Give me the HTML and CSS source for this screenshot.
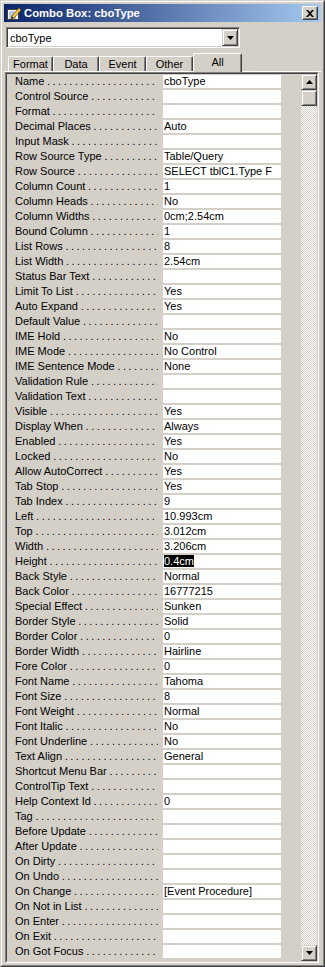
FILE: index.html
```html
<!DOCTYPE html>
<html lang="en">
<head>
    <meta charset="UTF-8">
    <title>Combo Box: cboType</title>
    <link rel="stylesheet" href="styles.css">
</head>
<body>
<div class="window">
  <div class="frame">
    <div class="titlebar">
      <svg class="app-icon" width="16" height="16" viewBox="0 0 16 16">
        <rect x="1.5" y="4.5" width="11" height="10" fill="#fff" stroke="#404040"/>
        <path d="M3 7h6M3 9h5M3 11h7M3 13h7" stroke="#7090c0"/>
        <polygon points="6,11 13,3 15,5 8,13 5,14" fill="#f8d048" stroke="#705000" stroke-width="0.8"/>
        <polygon points="5,14 6,11 8,13" fill="#404040"/>
      </svg>
      <span class="title">Combo Box: cboType</span>
      <span class="close">
        <svg width="8" height="7" viewBox="0 0 8 7"><path d="M0 0h2l2 2 2-2h2L5 3.5 8 7H6L4 5 2 7H0l3-3.5z" fill="#000"/></svg>
      </span>
    </div>

    <div class="combo">
      <span class="combo-text">cboType</span>
      <span class="btn combo-btn">
        <svg width="7" height="4" viewBox="0 0 7 4"><polygon points="0,0 7,0 3.5,4" fill="#000"/></svg>
      </span>
    </div>

    <div class="tabs">
      <span class="tab w45">Format</span>
      <span class="tab w46">Data</span>
      <span class="tab w47">Event</span>
      <span class="tab w47">Other</span>
      <span class="tab active">All</span>
    </div>

    <div class="sheet">
      <div class="sheet-inner">
        <div class="list">
          <div class="row"><span class="label">Name</span><span class="value">cboType</span></div>
          <div class="row"><span class="label">Control Source</span><span class="value"></span></div>
          <div class="row"><span class="label">Format</span><span class="value"></span></div>
          <div class="row"><span class="label">Decimal Places</span><span class="value">Auto</span></div>
          <div class="row"><span class="label">Input Mask</span><span class="value"></span></div>
          <div class="row"><span class="label">Row Source Type</span><span class="value">Table/Query</span></div>
          <div class="row"><span class="label">Row Source</span><span class="value">SELECT tblC1.Type F</span></div>
          <div class="row"><span class="label">Column Count</span><span class="value">1</span></div>
          <div class="row"><span class="label">Column Heads</span><span class="value">No</span></div>
          <div class="row"><span class="label">Column Widths</span><span class="value">0cm;2.54cm</span></div>
          <div class="row"><span class="label">Bound Column</span><span class="value">1</span></div>
          <div class="row"><span class="label">List Rows</span><span class="value">8</span></div>
          <div class="row"><span class="label">List Width</span><span class="value">2.54cm</span></div>
          <div class="row"><span class="label">Status Bar Text</span><span class="value"></span></div>
          <div class="row"><span class="label">Limit To List</span><span class="value">Yes</span></div>
          <div class="row"><span class="label">Auto Expand</span><span class="value">Yes</span></div>
          <div class="row"><span class="label">Default Value</span><span class="value"></span></div>
          <div class="row"><span class="label">IME Hold</span><span class="value">No</span></div>
          <div class="row"><span class="label">IME Mode</span><span class="value">No Control</span></div>
          <div class="row"><span class="label">IME Sentence Mode</span><span class="value">None</span></div>
          <div class="row"><span class="label">Validation Rule</span><span class="value"></span></div>
          <div class="row"><span class="label">Validation Text</span><span class="value"></span></div>
          <div class="row"><span class="label">Visible</span><span class="value">Yes</span></div>
          <div class="row"><span class="label">Display When</span><span class="value">Always</span></div>
          <div class="row"><span class="label">Enabled</span><span class="value">Yes</span></div>
          <div class="row"><span class="label">Locked</span><span class="value">No</span></div>
          <div class="row"><span class="label">Allow AutoCorrect</span><span class="value">Yes</span></div>
          <div class="row"><span class="label">Tab Stop</span><span class="value">Yes</span></div>
          <div class="row"><span class="label">Tab Index</span><span class="value">9</span></div>
          <div class="row"><span class="label">Left</span><span class="value">10.993cm</span></div>
          <div class="row"><span class="label">Top</span><span class="value">3.012cm</span></div>
          <div class="row"><span class="label">Width</span><span class="value">3.206cm</span></div>
          <div class="row"><span class="label">Height</span><span class="value"><span class="selected">0.4cm</span></span></div>
          <div class="row"><span class="label">Back Style</span><span class="value">Normal</span></div>
          <div class="row"><span class="label">Back Color</span><span class="value">16777215</span></div>
          <div class="row"><span class="label">Special Effect</span><span class="value">Sunken</span></div>
          <div class="row"><span class="label">Border Style</span><span class="value">Solid</span></div>
          <div class="row"><span class="label">Border Color</span><span class="value">0</span></div>
          <div class="row"><span class="label">Border Width</span><span class="value">Hairline</span></div>
          <div class="row"><span class="label">Fore Color</span><span class="value">0</span></div>
          <div class="row"><span class="label">Font Name</span><span class="value">Tahoma</span></div>
          <div class="row"><span class="label">Font Size</span><span class="value">8</span></div>
          <div class="row"><span class="label">Font Weight</span><span class="value">Normal</span></div>
          <div class="row"><span class="label">Font Italic</span><span class="value">No</span></div>
          <div class="row"><span class="label">Font Underline</span><span class="value">No</span></div>
          <div class="row"><span class="label">Text Align</span><span class="value">General</span></div>
          <div class="row"><span class="label">Shortcut Menu Bar</span><span class="value"></span></div>
          <div class="row"><span class="label">ControlTip Text</span><span class="value"></span></div>
          <div class="row"><span class="label">Help Context Id</span><span class="value">0</span></div>
          <div class="row"><span class="label">Tag</span><span class="value"></span></div>
          <div class="row"><span class="label">Before Update</span><span class="value"></span></div>
          <div class="row"><span class="label">After Update</span><span class="value"></span></div>
          <div class="row"><span class="label">On Dirty</span><span class="value"></span></div>
          <div class="row"><span class="label">On Undo</span><span class="value"></span></div>
          <div class="row"><span class="label">On Change</span><span class="value">[Event Procedure]</span></div>
          <div class="row"><span class="label">On Not in List</span><span class="value"></span></div>
          <div class="row"><span class="label">On Enter</span><span class="value"></span></div>
          <div class="row"><span class="label">On Exit</span><span class="value"></span></div>
          <div class="row"><span class="label">On Got Focus</span><span class="value"></span></div>
        </div>

        <div class="scrollbar">
          <span class="btn arrow">
            <svg width="7" height="4" viewBox="0 0 7 4"><polygon points="0,4 7,4 3.5,0" fill="#000"/></svg>
          </span>
          <span class="btn thumb"></span>
          <span class="track"></span>
          <span class="btn arrow">
            <svg width="7" height="4" viewBox="0 0 7 4"><polygon points="0,0 7,0 3.5,4" fill="#000"/></svg>
          </span>
        </div>
      </div>
    </div>
  </div>
</div>
</body>
</html>
```

FILE: styles.css
```css
body{
    margin: 0;
    background-color: #d4d0c8;
    font-family: "Liberation Sans", Arial, sans-serif;
    font-size: 11px;
    color: #000;
}

.window{
    width: 325px;
    height: 967px;
    box-sizing: border-box;
    border: 1px solid;
    border-color: #d4d0c8 #404040 #404040 #d4d0c8;
    background-color: #d4d0c8;
}

.frame{
    height: 100%;
    box-sizing: border-box;
    border: 1px solid;
    border-color: #fff #808080 #808080 #fff;
    padding: 2px;
    display: flex;
    flex-direction: column;
}

/* caption */
.titlebar{
    height: 18px;
    flex-shrink: 0;
    display: flex;
    align-items: center;
    padding: 0 3px 0 2px;
    background: linear-gradient(to right, #0a246a, #a6caf0);
    color: #fff;
    font-weight: bold;
    font-size: 11.3px;
}

.app-icon{
    flex-shrink: 0;
    margin-right: 2px;
}

.title{
    white-space: nowrap;
}

.close{
    margin-left: auto;
    width: 16px;
    height: 14px;
    box-sizing: border-box;
    background-color: #d4d0c8;
    border: 1px solid;
    border-color: #fff #404040 #404040 #fff;
    box-shadow: inset -1px -1px #808080;
    display: flex;
    align-items: center;
    justify-content: center;
    padding-right: 1px;
}

/* 3d button face */
.btn{
    display: flex;
    align-items: center;
    justify-content: center;
    box-sizing: border-box;
    background-color: #d4d0c8;
    border: 1px solid;
    border-color: #d4d0c8 #404040 #404040 #d4d0c8;
    box-shadow: inset 1px 1px #fff, inset -1px -1px #808080;
}

/* object combo */
.combo{
    margin: 5px 0 0 2px;
    width: 234px;
    height: 21px;
    box-sizing: border-box;
    border: 1px solid;
    border-color: #808080 #fff #fff #808080;
    box-shadow: inset 1px 1px #404040, inset -1px -1px #d4d0c8;
    background-color: #fff;
    display: flex;
    align-items: center;
    padding: 1px;
}

.combo-text{
    flex: 1;
    padding-left: 2px;
}

.combo-btn{
    width: 16px;
    height: 17px;
}

/* tabs */
.tabs{
    margin-top: 5px;
    height: 18px;
    flex-shrink: 0;
    display: flex;
    align-items: flex-end;
    padding-left: 4px;
    border-bottom: 1px solid #fff;
}

.tab{
    height: 15px;
    box-sizing: border-box;
    border: 1px solid;
    border-bottom: none;
    border-color: #fff #404040 #fff #fff;
    box-shadow: inset -1px 0 #808080;
    border-radius: 2px 2px 0 0;
    text-align: center;
    line-height: 14px;
    white-space: nowrap;
}

.w45{ width: 45px; }
.w46{ width: 46px; }
.w47{ width: 47px; }

.tab.active{
    width: 49px;
    height: 19px;
    margin-bottom: -1px;
    background-color: #d4d0c8;
    line-height: 16px;
    position: relative;
}

/* property list */
.sheet{
    margin-left: 1px;
    width: 314px;
    flex: 1;
    box-sizing: border-box;
    border: 1px solid;
    border-color: #808080 #fff #fff #808080;
}

.sheet-inner{
    height: 100%;
    box-sizing: border-box;
    border: 1px solid;
    border-color: #404040 #d4d0c8 #d4d0c8 #404040;
    display: flex;
}

.list{
    width: 274px;
    padding-top: 1px;
}

.row{
    display: flex;
    height: 15px;
}

.label{
    width: 156px;
    height: 13px;
    box-sizing: border-box;
    padding: 0 5px 0 8px;
    line-height: 13px;
    white-space: nowrap;
    display: flex;
    overflow: hidden;
}

.label::after{
    content: " . . . . . . . . . . . . . . . . . . . . . . . . . . . . . . . . . . . .";
    white-space: pre;
    letter-spacing: -0.3px;
    flex: 1;
    min-width: 0;
    overflow: hidden;
}

.value{
    width: 118px;
    height: 13px;
    box-sizing: border-box;
    background-color: #fff;
    padding-left: 1px;
    line-height: 13px;
    white-space: nowrap;
    overflow: hidden;
}

.selected{
    background-color: #000;
    color: #fff;
}

.scrollbar{
    margin-left: 20px;
    width: 16px;
    display: flex;
    flex-direction: column;
}

.arrow,
.thumb{
    width: 16px;
    height: 16px;
    flex-shrink: 0;
}

.track{
    flex: 1;
    background: repeating-conic-gradient(#d4d0c8 0 25%, #fff 0 50%) 0 0 / 2px 2px;
}
```
